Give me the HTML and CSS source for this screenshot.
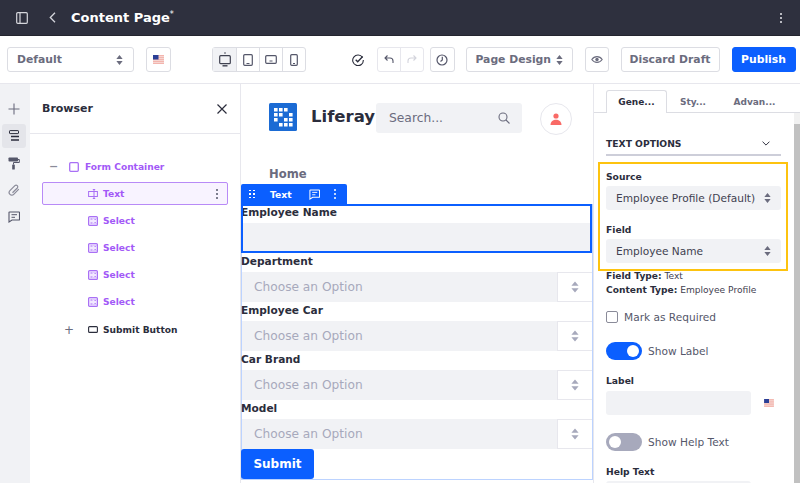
FILE: index.html
```html
<!DOCTYPE html>
<html lang="en">
<head>
    <meta charset="UTF-8">
    <title>Content Page</title>
    <link rel="stylesheet" href="styles.css">
</head>
<body>
    <svg class="defs" width="0" height="0">
        <symbol id="updown" viewBox="0 0 10 14"><path d="M5 0l4.500 5.500H.5zM5 14L.5 8.500h9z" fill="currentColor"/></symbol>
        <symbol id="flag" viewBox="0 0 11 9">
            <rect width="11" height="9" fill="#f3b5ae"/>
            <path d="M0 1.500h11M0 3.500h11M0 5.500h11M0 7.500h11" stroke="#f6dedb" stroke-width=".8"/>
            <rect width="5.500" height="4.500" fill="#2b3f96"/>
        </symbol>
        <symbol id="select" viewBox="0 0 10 10">
            <rect x=".6" y=".6" width="8.800" height="8.800" rx="1" fill="#f2e9ff" stroke="#a970f5" stroke-width="1.200"/>
            <path d="M2.500 3h2M2.500 7h2M6 2.500l1.200 1.200L8 2.500M6 7.500l1.200-1.200L8 7.500" fill="none" stroke="#a970f5"/>
        </symbol>
    </svg>

    <header class="topbar">
        <svg class="top-icon" width="12" height="12" viewBox="0 0 12 12"><rect x=".7" y=".7" width="10.600" height="10.600" rx="1" fill="none" stroke="#d5d6dc" stroke-width="1.200"/><path d="M4 1v10" stroke="#d5d6dc" stroke-width="1.200"/></svg>
        <svg class="top-back" width="7" height="11" viewBox="0 0 7 11"><path d="M6 .8L1.300 5.500 6 10.200" fill="none" stroke="#d5d6dc" stroke-width="1.300"/></svg>
        <span class="page-title">Content Page<sup>*</sup></span>
        <span class="dots dots-top"><i></i><i></i><i></i></span>
    </header>

    <div class="toolbar">
        <div class="btn select-default">Default <svg class="updown" width="7" height="10"><use href="#updown"/></svg></div>
        <div class="btn square flag-btn"><svg width="11" height="9"><use href="#flag"/></svg></div>
        <div class="devices">
            <span class="device on"><svg width="12" height="15" viewBox="0 0 12 15"><circle cx="6" cy="1" r=".8" fill="#3f4150"/><rect x=".7" y="3.700" width="10.600" height="8" rx="1" fill="none" stroke="#3f4150" stroke-width="1.200"/><path d="M3.500 13.800h5" stroke="#3f4150" stroke-width="1.400"/></svg></span>
            <span class="device"><svg width="10" height="12" viewBox="0 0 10 12"><rect x=".7" y=".7" width="8.600" height="10.600" rx="1" fill="none" stroke="#55576a" stroke-width="1.200"/><path d="M3.500 9.500h3" stroke="#55576a"/></svg></span>
            <span class="device"><svg width="12" height="9" viewBox="0 0 12 9"><rect x=".7" y=".7" width="10.600" height="7.600" rx="1" fill="none" stroke="#55576a" stroke-width="1.200"/><path d="M4.500 6h3" stroke="#55576a"/></svg></span>
            <span class="device"><svg width="8" height="12" viewBox="0 0 8 12"><rect x=".7" y=".7" width="6.600" height="10.600" rx="1" fill="none" stroke="#55576a" stroke-width="1.200"/><path d="M3 9.500h2" stroke="#55576a"/></svg></span>
        </div>
        <svg class="check" width="12" height="12" viewBox="0 0 12 12"><path d="M10.500 3.500A5.300 5.300 0 1 0 11.300 6" fill="none" stroke="#2b2d3c" stroke-width="1.100"/><path d="M3.700 5.700l2 2 5-5.200" fill="none" stroke="#2b2d3c" stroke-width="1.300"/></svg>
        <div class="undo-group">
            <span class="undo"><svg width="10" height="9" viewBox="0 0 10 9"><path d="M3.500.5L1 3l2.500 2.500M1 3h5a3 3 0 0 1 3 3v2" fill="none" stroke="#55576a" stroke-width="1.100"/></svg></span>
            <span class="undo"><svg width="10" height="9" viewBox="0 0 10 9"><path d="M6.500.5L9 3 6.500 5.500M9 3H4a3 3 0 0 0-3 3v2" fill="none" stroke="#d3d4dc" stroke-width="1.100"/></svg></span>
        </div>
        <div class="btn square history"><svg width="12" height="12" viewBox="0 0 12 12"><circle cx="6" cy="6" r="5" fill="none" stroke="#55576a" stroke-width="1.200"/><path d="M6.300 2.800V6L4.500 7.500" fill="none" stroke="#55576a" stroke-width="1.200"/></svg></div>
        <div class="btn design">Page Design <svg class="updown" width="7" height="10"><use href="#updown"/></svg></div>
        <div class="btn square eye"><svg width="12" height="9" viewBox="0 0 12 9"><path d="M.8 4.500C3.300.7 8.700.7 11.200 4.500 8.700 8.300 3.300 8.300.8 4.500z" fill="none" stroke="#6b6c7e" stroke-width="1.100"/><circle cx="6" cy="4.500" r="1.700" fill="#6b6c7e"/></svg></div>
        <div class="btn discard">Discard Draft</div>
        <div class="btn publish">Publish</div>
    </div>

    <div class="main">
        <nav class="rail">
            <span class="rail-item"><svg width="12" height="12" viewBox="0 0 12 12"><path d="M6 .5v11M.5 6h11" stroke="#6b6c7e" stroke-width="1.100"/></svg></span>
            <span class="rail-item on"><svg width="12" height="12" viewBox="0 0 12 12"><rect x="1.500" y=".6" width="9" height="3" rx=".6" fill="none" stroke="#2b2d3c"/><path d="M3 6.500h8M3 10h8" stroke="#2b2d3c" stroke-width="1.700"/></svg></span>
            <span class="rail-item"><svg width="12" height="13" viewBox="0 0 12 13"><rect x=".5" y=".5" width="9.500" height="4" rx=".8" fill="#55576a"/><path d="M10 2.500h1.300v3H5.500v2" fill="none" stroke="#55576a"/><rect x="4.200" y="7.500" width="2.600" height="5" rx=".6" fill="#55576a"/></svg></span>
            <span class="rail-item"><svg width="12" height="12" viewBox="0 0 12 12"><path d="M10.800 5.200L5.700 10.300a2.500 2.500 0 0 1-3.800-3.600l5-5a1.600 1.600 0 0 1 2.400 2.300L4.500 8.700" fill="none" stroke="#8a8b99" stroke-width="1.200"/></svg></span>
            <span class="rail-item"><svg width="12" height="12" viewBox="0 0 12 12"><path d="M1.500 1h9.500a.5.500 0 0 1 .5.500V8.500a.5.500 0 0 1-.5.500H4L1 11V1.500a.5.500 0 0 1 .5-.5z" fill="none" stroke="#55576a" stroke-width="1.100"/><path d="M3.500 3.700h5.500M3.500 6.300h3.500" stroke="#55576a"/></svg></span>
        </nav>

        <aside class="browser">
            <div class="browser-head">
                <span>Browser</span>
                <svg width="10" height="10" viewBox="0 0 10 10"><path d="M.5.500l9 9M9.500.500l-9 9" stroke="#2b2d3c" stroke-width="1.200"/></svg>
            </div>
            <ul class="tree">
                <li class="tree-row root"><span class="toggle-mark">&minus;</span><svg class="node-icon" width="10" height="10" viewBox="0 0 10 10"><rect x=".7" y=".7" width="8.600" height="8.600" rx="1" fill="none" stroke="#a970f5" stroke-width="1.300"/></svg>Form Container</li>
                <li class="tree-row child selected"><svg class="node-icon" width="10" height="10" viewBox="0 0 10 10"><rect x=".6" y="2.500" width="8.800" height="5" fill="none" stroke="#a970f5"/><path d="M6 .5v9M4.800.5h2.400M4.800 9.500h2.400" fill="none" stroke="#a970f5"/></svg>Text<span class="dots dots-row"><i></i><i></i><i></i></span></li>
                <li class="tree-row child"><svg class="node-icon" width="10" height="10"><use href="#select"/></svg>Select</li>
                <li class="tree-row child"><svg class="node-icon" width="10" height="10"><use href="#select"/></svg>Select</li>
                <li class="tree-row child"><svg class="node-icon" width="10" height="10"><use href="#select"/></svg>Select</li>
                <li class="tree-row child"><svg class="node-icon" width="10" height="10"><use href="#select"/></svg>Select</li>
                <li class="tree-row child dark"><span class="plus-mark">+</span><svg class="node-icon" width="10" height="7" viewBox="0 0 10 7"><rect x=".6" y=".6" width="8.800" height="5.800" rx="1" fill="none" stroke="#2b2d3c" stroke-width="1.100"/></svg>Submit Button</li>
            </ul>
        </aside>

        <section class="canvas">
            <div class="site-head">
                <svg class="logo" width="28" height="28" viewBox="0 0 28 28">
                    <rect width="28" height="28" rx="1.500" fill="#1b6bd4"/>
                    <path d="M5 5h3.600v3.600H5zM10 5h3.600v3.600H10zM15 5h3.600v3.600H15zM5 10h3.600v3.600H5zM10 10h3.600v3.600H10zM20 10h3.600v3.600H20zM5 15h3.600v3.600H5zM15 15h3.600v3.600H15zM20 15h3.600v3.600H20zM10 20h3.600v3.600H10zM15 20h3.600v3.600H15zM20 20h3.600v3.600H20z" fill="#fff"/>
                </svg>
                <span class="site-name">Liferay</span>
                <div class="search">
                    <span>Search...</span>
                    <svg width="12" height="12" viewBox="0 0 12 12"><circle cx="5" cy="5" r="4" fill="none" stroke="#6b6c7e" stroke-width="1.100"/><path d="M8 8l3.500 3.500" stroke="#6b6c7e" stroke-width="1.100"/></svg>
                </div>
                <span class="avatar"><svg width="12" height="12" viewBox="0 0 12 12"><circle cx="6" cy="3" r="2.600" fill="#f96a66"/><path d="M.5 12c0-7 11-7 11 0z" fill="#f96a66"/></svg></span>
            </div>
            <div class="site-nav">Home</div>
            <div class="form-wrap">
                <div class="tag">
                    <span class="grip"><i></i><i></i><i></i><i></i><i></i><i></i></span>
                    <b>Text</b>
                    <svg width="11" height="11" viewBox="0 0 12 12"><path d="M1.500 1h9.500a.5.500 0 0 1 .5.500V8.500a.5.500 0 0 1-.5.500H4L1 11V1.500a.5.500 0 0 1 .5-.5z" fill="none" stroke="#fff" stroke-width="1.100"/><path d="M3.500 3.700h5.500M3.500 6.300h3.500" stroke="#fff"/></svg>
                    <span class="dots dots-tag"><i></i><i></i><i></i></span>
                </div>
                <form class="form">
                    <div class="group active">
                        <div class="field-label">Employee Name</div>
                        <div class="text-input"></div>
                    </div>
                    <div class="group">
                        <div class="field-label">Department</div>
                        <div class="option-row"><span class="option">Choose an Option</span><span class="arrows"><svg width="8" height="12"><use href="#updown"/></svg></span></div>
                    </div>
                    <div class="group">
                        <div class="field-label">Employee Car</div>
                        <div class="option-row"><span class="option">Choose an Option</span><span class="arrows"><svg width="8" height="12"><use href="#updown"/></svg></span></div>
                    </div>
                    <div class="group">
                        <div class="field-label">Car Brand</div>
                        <div class="option-row"><span class="option">Choose an Option</span><span class="arrows"><svg width="8" height="12"><use href="#updown"/></svg></span></div>
                    </div>
                    <div class="group">
                        <div class="field-label">Model</div>
                        <div class="option-row"><span class="option">Choose an Option</span><span class="arrows"><svg width="8" height="12"><use href="#updown"/></svg></span></div>
                    </div>
                    <div class="submit">Submit</div>
                </form>
            </div>
        </section>

        <aside class="props">
            <div class="tabs">
                <span class="tab on">Gene...</span>
                <span class="tab">Sty...</span>
                <span class="tab">Advan...</span>
            </div>
            <div class="props-body">
                <div class="props-content">
                    <div class="section-title"><span>TEXT OPTIONS</span><svg width="8" height="5" viewBox="0 0 10 6"><path d="M.7.700L5 5 9.300.700" fill="none" stroke="#2b2d3c" stroke-width="1.200"/></svg></div>
                    <div class="highlight">
                        <div class="prop-label">Source</div>
                        <div class="prop-select">Employee Profile (Default)<svg width="7" height="10"><use href="#updown"/></svg></div>
                        <div class="prop-label second">Field</div>
                        <div class="prop-select">Employee Name<svg width="7" height="10"><use href="#updown"/></svg></div>
                    </div>
                    <div class="meta"><b>Field Type:</b> Text</div>
                    <div class="meta"><b>Content Type:</b> Employee Profile</div>
                    <label class="check-row"><span class="checkbox"></span>Mark as Required</label>
                    <div class="switch-row"><span class="switch on"><i></i></span>Show Label</div>
                    <div class="prop-label label-head">Label</div>
                    <div class="label-row"><div class="label-input"></div><svg width="10" height="8"><use href="#flag"/></svg></div>
                    <div class="switch-row help"><span class="switch"><i></i></span>Show Help Text</div>
                    <div class="prop-label help-head">Help Text</div>
                    <div class="help-input"></div>
                </div>
                <div class="scrollbar"><span class="thumb"></span></div>
            </div>
        </aside>
    </div>
</body>
</html>
```

FILE: styles.css
```css
*{
    margin: 0px;
    padding: 0px;
    box-sizing: border-box;
    list-style: none;
}
html, body{
    width: 800px;
    height: 483px;
    overflow: hidden;
}
body{
    font-family: "DejaVu Sans", sans-serif;
    font-size: 12px;
    color: #2b2d3c;
    background: #fff;
}
.defs{
    position: absolute;
}
.topbar{
    height: 36px;
    background: #2e303e;
    border-bottom: 1px solid #24252f;
    display: flex;
    align-items: center;
    padding-left: 16px;
    color: #fff;
}
.top-back{
    margin-left: 21px;
}
.page-title{
    margin-left: 15px;
    font-size: 13px;
    font-weight: bold;
    flex: 1;
}
.page-title sup{
    font-size: 8px;
    font-weight: normal;
    line-height: 0;
}
.dots{
    display: flex;
    flex-direction: column;
    gap: 2px;
}
.dots i{
    width: 2px;
    height: 2px;
    border-radius: 50%;
    background: currentColor;
}
.dots-top{
    color: #e7e7ed;
    margin-right: 18px;
}
.toolbar{
    height: 48px;
    border-bottom: 1px solid #e7e7ed;
    display: flex;
    align-items: center;
    padding: 0 0 0 7px;
}
.toolbar > *{
    flex: none;
}
.btn{
    height: 25px;
    border: 1px solid #dcdde3;
    border-radius: 3px;
    display: flex;
    align-items: center;
    justify-content: center;
    font-size: 10.800px;
    font-weight: bold;
    color: #6b6c7e;
    background: #fff;
}
.square{
    width: 24.500px;
}
.select-default{
    width: 127px;
    justify-content: space-between;
    padding: 0 10px 0 9px;
}
.flag-btn{
    margin-left: 12px;
}
.devices{
    display: flex;
    margin-left: 41.500px;
    height: 25px;
    border: 1px solid #dcdde3;
    border-radius: 3px;
}
.device{
    width: 23px;
    display: flex;
    align-items: center;
    justify-content: center;
    border-left: 1px solid #dcdde3;
}
.device:first-child{
    border-left: 0;
}
.device.on{
    background: #f1f2f5;
}
.check{
    margin-left: 46px;
}
.undo-group{
    display: flex;
    margin-left: 13px;
    height: 25px;
    border: 1px solid #e7e7ed;
    border-radius: 3px;
}
.undo{
    width: 22.500px;
    display: flex;
    align-items: center;
    justify-content: center;
}
.undo:first-child{
    border-right: 1px solid #e7e7ed;
}
.history{
    margin-left: 6px;
}
.design{
    width: 106.500px;
    margin-left: 11.500px;
    gap: 5px;
}
.eye{
    margin-left: 12px;
}
.discard{
    width: 99px;
    margin-left: 11.500px;
}
.publish{
    width: 64px;
    margin-left: 12px;
    background: #0b5fff;
    border-color: #0b5fff;
    color: #fff;
}
.main{
    display: flex;
    height: 399px;
}
.rail{
    width: 30px;
    background: #f1f2f5;
    display: flex;
    flex-direction: column;
    padding: 13px 0 0 2px;
    gap: 3px;
}
.rail-item{
    width: 24px;
    height: 24px;
    display: flex;
    align-items: center;
    justify-content: center;
    border-radius: 3px;
}
.rail-item.on{
    background: #e4e5ea;
}
.browser{
    width: 211px;
    border-right: 1px solid #e7e7ed;
}
.browser-head{
    height: 50px;
    border-bottom: 1px solid #e7e7ed;
    display: flex;
    align-items: center;
    justify-content: space-between;
    padding: 0 13px 0 12px;
    font-size: 11px;
    font-weight: bold;
}
.tree{
    padding: 21px 12px 0 12px;
}
.tree-row{
    height: 23px;
    margin-bottom: 4px;
    display: flex;
    align-items: center;
    font-size: 9.100px;
    font-weight: bold;
    color: #a259f7;
    position: relative;
    border: 1px solid transparent;
    border-radius: 2px;
}
.root{
    padding-left: 26px;
}
.child{
    padding-left: 45px;
}
.node-icon{
    margin-right: 6px;
    flex: none;
}
.child .node-icon{
    margin-right: 5px;
}
.toggle-mark{
    width: 26px;
    margin-left: -26px;
    padding-left: 6px;
    color: #8a8b99;
    font-size: 11px;
}
.plus-mark{
    position: absolute;
    left: 21px;
    color: #6b6c7e;
    font-size: 12px;
    font-weight: normal;
}
.selected{
    background: #f8f3ff;
    border-color: #b88af7;
}
.dark{
    color: #2b2d3c;
    margin-top: 5px;
}
.dots-row{
    position: absolute;
    right: 9px;
    color: #55576a;
}
.canvas{
    width: 352px;
    flex: none;
}
.site-head{
    height: 68px;
    display: flex;
    align-items: flex-start;
    padding: 19px 0 0 28px;
}
.site-name{
    font-size: 16.500px;
    font-weight: bold;
    margin-left: 14px;
    width: 65px;
    line-height: 28px;
    white-space: nowrap;
}
.search{
    width: 146px;
    height: 30px;
    background: #f1f2f5;
    border-radius: 3px;
    display: flex;
    align-items: center;
    justify-content: space-between;
    padding: 0 12px 0 13px;
    font-size: 12.300px;
    color: #6b6c7e;
}
.avatar{
    width: 32px;
    height: 32px;
    margin-left: 18px;
    border: 1px solid #e7e7ed;
    border-radius: 50%;
    display: flex;
    align-items: center;
    justify-content: center;
}
.site-nav{
    height: 32px;
    padding: 14px 0 0 28px;
    font-size: 11.600px;
    font-weight: bold;
    color: #6b6c7e;
    line-height: 16px;
}
.tag{
    width: 106px;
    height: 20px;
    background: #0b5fff;
    border-radius: 2px 2px 0 0;
    color: #fff;
    display: flex;
    align-items: center;
    font-size: 9.200px;
    padding-left: 8px;
}
.tag b{
    margin-left: 15px;
    margin-right: 17px;
}
.grip{
    display: grid;
    grid-template-columns: 2px 2px;
    gap: 2px;
}
.grip i{
    width: 1.500px;
    height: 1.500px;
    background: #fff;
}
.dots-tag{
    margin-left: 14px;
}
.form{
    border: solid #bcd3ff;
    border-width: 0 1px 1px 1px;
}
.group{
    height: 49px;
}
.group.active{
    outline: 2px solid #0b5fff;
    outline-offset: -2px;
    margin-left: -1px;
    padding: 0 2px;
}
.field-label{
    height: 19px;
    margin-left: -1px;
    font-size: 10.600px;
    font-weight: bold;
    line-height: 16px;
}
.active .field-label{
    margin-left: -2px;
}
.text-input{
    height: 29px;
    background: #f1f2f5;
}
.option-row{
    height: 30px;
    display: flex;
    background: #f1f2f5;
}
.option{
    flex: 1;
    padding-left: 12px;
    font-size: 12.200px;
    line-height: 30px;
    color: #a7a9bc;
}
.arrows{
    width: 35px;
    background: #fff;
    border: solid #e7e7ed;
    border-width: 1px 0 1px 1px;
    display: flex;
    align-items: center;
    justify-content: center;
    color: #a7a9bc;
}
.submit{
    width: 73px;
    height: 30px;
    margin-left: -1px;
    background: #0b5fff;
    border-radius: 3px;
    color: #fff;
    font-size: 12px;
    font-weight: bold;
    display: flex;
    align-items: center;
    justify-content: center;
}
.props{
    flex: 1;
    border-left: 1px solid #e7e7ed;
    display: flex;
    flex-direction: column;
    min-width: 0;
}
.tabs{
    height: 29px;
    padding: 6px 0 0 12px;
    display: flex;
    border-bottom: 1px solid #dcdde3;
    font-size: 9px;
    font-weight: bold;
    color: #6b6c7e;
}
.tab{
    width: 52px;
    height: 23px;
    display: flex;
    align-items: center;
    justify-content: center;
}
.tab.on{
    width: 61px;
    color: #2b2d3c;
    background: #fff;
    border: 1px solid #dcdde3;
    border-bottom: 0;
    border-radius: 3px 3px 0 0;
}
.tab:last-child{
    width: 71px;
}
.props-body{
    flex: 1;
    display: flex;
    min-height: 0;
    overflow: hidden;
}
.props-content{
    flex: 1;
    padding: 0 13px 0 12px;
}
.scrollbar{
    width: 6px;
    background: #f1f1f1;
    padding-top: 11px;
}
.thumb{
    display: block;
    height: 400px;
    background: #c1c1c1;
}
.section-title{
    height: 43px;
    padding-top: 24px;
    border-bottom: 2px solid #cdced9;
    display: flex;
    justify-content: space-between;
    font-size: 9.200px;
    font-weight: bold;
    line-height: 14px;
}
.section-title svg{
    margin: 4px 11px 0 0;
}
.highlight{
    margin: 6px -7px 0 -8px;
    height: 109px;
    border: 2px solid #fdc30f;
    padding: 6px 5px 0 6px;
}
.prop-label{
    font-size: 9.200px;
    font-weight: bold;
    line-height: 14px;
    height: 16px;
}
.second{
    margin-top: 13px;
}
.prop-select{
    height: 24px;
    background: #f1f2f5;
    border-radius: 3px;
    display: flex;
    align-items: center;
    justify-content: space-between;
    padding: 0 10px 0 10px;
    font-size: 10.600px;
    color: #3f4150;
    white-space: nowrap;
}
.prop-select svg{
    color: #6b6c7e;
}
.meta{
    font-size: 9.100px;
    line-height: 14px;
    color: #3f4150;
}
.meta b{
    color: #2b2d3c;
}
.highlight + .meta{
    margin-top: -2px;
}
.check-row{
    display: flex;
    align-items: center;
    gap: 6px;
    margin-top: 13px;
    font-size: 10.600px;
    color: #55576a;
    height: 14px;
}
.checkbox{
    width: 12px;
    height: 12px;
    border: 1px solid #8a8b99;
    border-radius: 2px;
}
.switch-row{
    display: flex;
    align-items: center;
    gap: 6px;
    height: 18px;
    margin-top: 18px;
    font-size: 10.600px;
    color: #55576a;
}
.switch{
    width: 36px;
    height: 18px;
    border-radius: 9px;
    background: #a7a9bc;
    display: flex;
    align-items: center;
    padding: 0 3px;
}
.switch i{
    width: 12px;
    height: 12px;
    background: #fff;
    border-radius: 50%;
}
.switch.on{
    background: #0b5fff;
    justify-content: flex-end;
}
.label-head{
    margin-top: 14px;
    height: 17px;
}
.label-row{
    display: flex;
    align-items: center;
    gap: 13px;
}
.label-input{
    width: 145px;
    height: 24px;
    background: #f1f2f5;
    border-radius: 3px;
}
.help{
    margin-top: 18px;
}
.help-head{
    margin-top: 14px;
    height: 16px;
}
.help-input{
    width: 145px;
    height: 24px;
    background: #f1f2f5;
    border-radius: 3px;
}
```
